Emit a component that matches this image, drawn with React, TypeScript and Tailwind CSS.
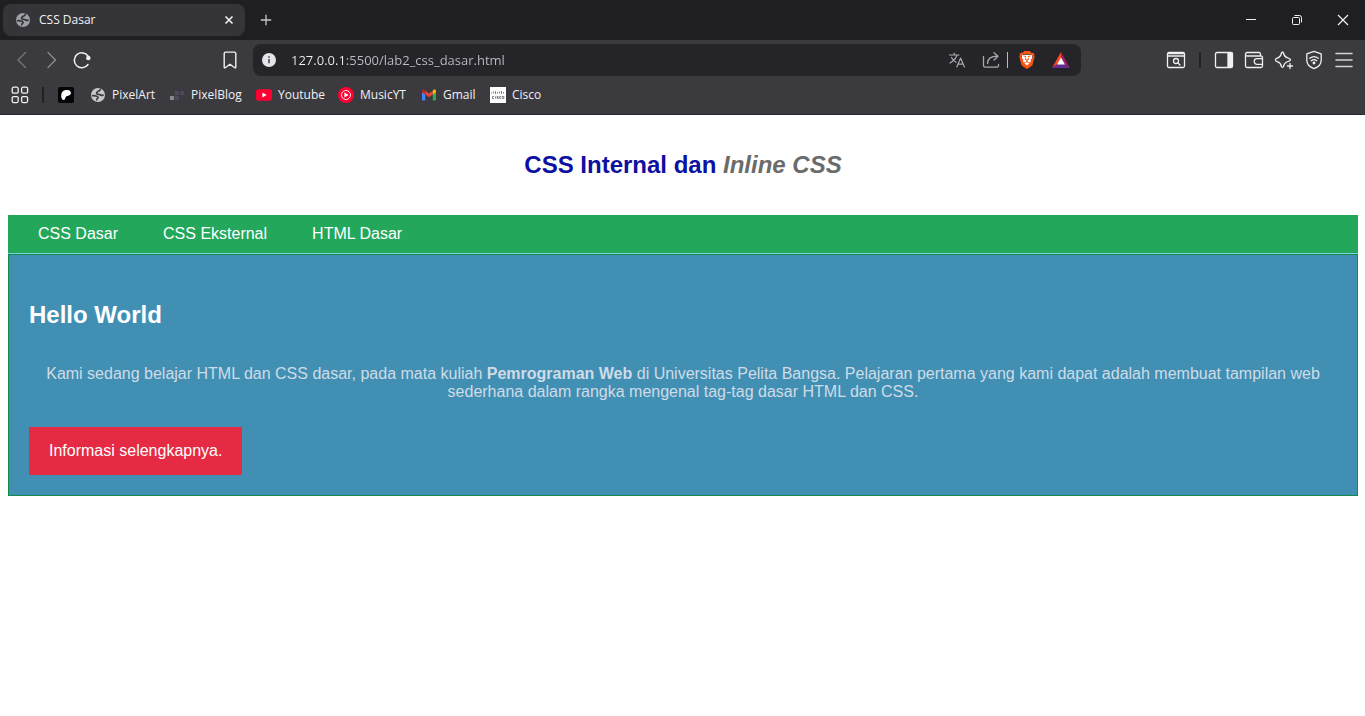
import type { ReactNode } from "react";
import { SiBrave } from "react-icons/si";

function Globe({ color, land }: { color: string; land: string }) {
  return (
    <svg viewBox="0 0 16 16" className="size-4 shrink-0" aria-hidden="true">
      <circle cx="8" cy="8" r="7" fill={color} />
      <path
        d="M10.300 2.400c-.2 1.600-1.700 1.300-2.700 2.200-.9.900-1.400 1.600-.7 2.300.8.700 2.300.1 3.100.8.700.7 1.500.9 3 .4"
        fill="none"
        stroke={land}
        strokeWidth="1.700"
        strokeLinecap="round"
      />
      <path
        d="M2.600 8.700c1.600-.4 2.400-.1 3.500.4 1 .4 2.100.5 2 1.500-.1.900-1.300.8-1.400 2.200"
        fill="none"
        stroke={land}
        strokeWidth="1.700"
        strokeLinecap="round"
      />
    </svg>
  );
}

function IconButton({ label, className = "", children }: { label: string; className?: string; children: ReactNode }) {
  return (
    <button type="button" aria-label={label} className={`flex shrink-0 items-center justify-center ${className}`}>
      {children}
    </button>
  );
}

function Icon({ children, className = "size-5", width = 1.3 }: { children: ReactNode; className?: string; width?: number }) {
  return (
    <svg
      viewBox="0 0 20 20"
      className={className}
      fill="none"
      stroke="currentColor"
      strokeWidth={width}
      strokeLinecap="round"
      strokeLinejoin="round"
      aria-hidden="true"
    >
      {children}
    </svg>
  );
}

function TabStrip() {
  return (
    <div className="flex h-10 items-center bg-[#1f1e23] text-[#f1f1f4]">
      <div className="ml-[3px] flex h-8 w-[242px] items-center rounded-lg bg-[#353439] pr-[10px] pl-3">
        <Globe color="#9aa0a6" land="#353439" />
        <span className="ml-2 flex-1 text-xs">CSS Dasar</span>
        <IconButton label="Close tab" className="size-3">
          <svg viewBox="0 0 12 12" className="size-3" stroke="currentColor" strokeWidth="1.600" aria-hidden="true">
            <path d="M2.500 2.500l7 7M9.500 2.500l-7 7" />
          </svg>
        </IconButton>
      </div>
      <IconButton label="New tab" className="ml-[11px] size-5">
        <svg viewBox="0 0 20 20" className="size-5" stroke="#c8c8cc" strokeWidth="1.300" aria-hidden="true">
          <path d="M10 4.800v10.400M4.800 10h10.400" />
        </svg>
      </IconButton>
      <div className="ml-auto flex">
        <IconButton label="Minimize" className="h-10 w-[46px] pl-[2px]">
          <svg viewBox="0 0 12 12" className="size-3" stroke="currentColor" aria-hidden="true">
            <path d="M1 5.500h10" />
          </svg>
        </IconButton>
        <IconButton label="Restore" className="h-10 w-[46px] pl-[2px]">
          <svg viewBox="0 0 12 12" className="size-3" fill="none" stroke="currentColor" aria-hidden="true">
            <rect x="1.500" y="3.500" width="7" height="7" rx="1" />
            <path d="M3.500 1.500h5a2 2 0 0 1 2 2v5" />
          </svg>
        </IconButton>
        <IconButton label="Close window" className="h-10 w-[46px] pl-[2px]">
          <svg viewBox="0 0 12 12" className="size-3" stroke="currentColor" strokeWidth="1.200" aria-hidden="true">
            <path d="M1 1l10 10M11 1L1 11" />
          </svg>
        </IconButton>
      </div>
    </div>
  );
}

function AddressBar() {
  return (
    <div className="flex h-8 w-[828px] min-w-0 items-center rounded-lg bg-[#252429] pr-[11px] pl-2 text-[#a9a9ae]">
      <IconButton label="Site information" className="size-4">
        <svg viewBox="0 0 16 16" className="size-4" aria-hidden="true">
          <circle cx="8" cy="8" r="7" fill="#e4e4e9" />
          <path d="M8 7v4.200M8 4.300v1.500" stroke="#4a494f" strokeWidth="1.600" />
        </svg>
      </IconButton>
      <input
        aria-label="Address"
        defaultValue="127.0.0.1:5500/lab2_css_dasar.html"
        className="ml-[14px] min-w-0 flex-1 bg-[linear-gradient(90deg,#f0f0f3_54px,#bcbec4_54px)] bg-clip-text text-[13px] leading-5 text-transparent caret-white outline-none"
      />
      <IconButton label="Translate" className="size-5">
        <Icon width={1.2}>
          <path d="M2.500 5h9.500M7.200 3v2M10 5c-1 3.500-3.500 6-7 8M4.500 7.500c1 2 2.500 3.500 4.500 4.800M9.800 17l3.800-9 3.800 9M11 14.200h5.200" />
        </Icon>
      </IconButton>
      <IconButton label="Share" className="ml-[14px] size-5">
        <Icon width={1.3}>
          <path d="M2.500 6.500v9c0 1 .7 1.700 1.700 1.700h11.600c1 0 1.700-.7 1.700-1.700v-1M6.500 13.500c0-5 3-7.300 10-7.300M13 2.700l4 3.500-4 3.800" />
        </Icon>
      </IconButton>
      <span className="ml-[6px] h-4 w-px bg-[#b9b9be]" />
      <IconButton label="Brave Shields" className="relative ml-[10px] size-[18px]">
        <svg viewBox="0 0 24 24" className="size-[18px]" aria-hidden="true">
          <path d="M5 5h14v9l-7 7-7-7z" fill="#fff" />
          <SiBrave size={24} color="#fb5411" />
        </svg>
      </IconButton>
      <IconButton label="Brave Rewards" className="ml-4 size-[18px]">
        <svg viewBox="0 0 18 18" className="size-[18px]" aria-hidden="true">
          <path d="M9 1v6.500L5.500 13 0 17z" fill="#ff4724" />
          <path d="M9 1l9 16-5.500-4L9 7.500z" fill="#9e1f63" />
          <path d="M0 17l5.500-4h7l5.500 4z" fill="#662d91" />
          <path d="M9 6.500l4 7H5z" fill="#fff" />
        </svg>
      </IconButton>
    </div>
  );
}

function Toolbar() {
  return (
    <div className="flex h-10 items-center pr-[11px] pl-3 text-[#f0f0f3]">
      <div className="flex items-center gap-[10px]">
        <IconButton label="Back" className="size-5 text-[#77767b]">
          <Icon><path d="M13.500 2.500L6 10l7.500 7.500" /></Icon>
        </IconButton>
        <IconButton label="Forward" className="size-5 text-[#8d8c91]">
          <Icon><path d="M6 2.500l7.500 7.500L6 17.500" /></Icon>
        </IconButton>
        <IconButton label="Reload" className="size-5">
          <Icon width={1.5}>
            <path d="M16 14.500A7.500 7.500 0 1 1 16.300 6.500" />
            <circle cx="16.300" cy="8" r="1.500" fill="currentColor" />
          </Icon>
        </IconButton>
      </div>
      <IconButton label="Bookmark this page" className="ml-32 size-5">
        <Icon width={1.4}>
          <path d="M4.200 3.500c0-.8.6-1.400 1.400-1.400h8.800c.8 0 1.400.6 1.400 1.400v13.700c0 .6-.5.9-1 .5L10 14.200l-4.800 3.500c-.5.4-1 .1-1-.5z" />
        </Icon>
      </IconButton>
      <div className="ml-[13px] flex min-w-0">
        <AddressBar />
      </div>
      <div className="ml-auto flex items-center gap-[10px]">
        <IconButton label="Search tabs" className="size-5">
          <Icon>
            <rect x="1.500" y="2.500" width="17" height="15" rx="1.500" />
            <path d="M2 3.500h16M2 6h16" />
            <circle cx="10" cy="11" r="2.500" />
            <path d="M12 13l2 2" />
          </Icon>
        </IconButton>
        <span className="mx-[3px] h-4 w-[2px] bg-[#222126]" />
        <IconButton label="Sidebar" className="size-5">
          <Icon>
            <rect x="1.500" y="2.500" width="17" height="15" rx="1.500" />
            <path d="M14 3v14h4V3z" fill="currentColor" />
          </Icon>
        </IconButton>
        <IconButton label="Wallet" className="size-5">
          <Icon>
            <path d="M16.500 6V4c0-.9-.7-1.500-1.500-1.500H3C2.200 2.500 1.500 3.200 1.500 4v12c0 .8.7 1.500 1.500 1.500h14c.8 0 1.500-.7 1.500-1.500V7.500c0-.8-.7-1.500-1.500-1.500H3.500C2.500 6 1.500 5.500 1.500 4.500M18.500 8.700h-5.500a2.800 2.800 0 0 0 0 5.600h5.500" />
          </Icon>
        </IconButton>
        <IconButton label="Leo AI" className="size-5">
          <Icon>
            <path d="M8.500 2.200c.6 0 .9.3 1 .8.6 3 1.500 4 4.500 5 1.500.5 2.500.8 2.500 1.800s-1 1.200-2.500 1.700c-3 1-3.900 2-4.500 5-.1.600-.5.900-1 .9s-.9-.3-1-.9c-.6-3-1.500-4-4.300-4.900-1.100-.4-1.800-.8-1.800-1.700s.7-1.400 1.800-1.800C6 7.200 6.900 6 7.500 3c.1-.5.500-.8 1-.8z" />
            <path d="M16 13.500v5M13.500 16h5" />
          </Icon>
        </IconButton>
        <IconButton label="VPN" className="size-5">
          <Icon>
            <path d="M10 1.300l7.200 2.500v6.500c0 3.800-3.200 6.900-7.200 8.400-4-1.500-7.200-4.600-7.200-8.400V3.800z" />
            <path d="M5.800 8.300c2.500-2 5.900-2 8.400 0M7.300 10.700c1.700-1.300 3.700-1.300 5.400 0" />
            <circle cx="10" cy="13" r=".8" fill="currentColor" />
          </Icon>
        </IconButton>
        <IconButton label="Menu" className="size-5 text-[#d4d4d8]">
          <Icon width={1.6}>
            <path d="M2 3.500h16M2 10h16M2 16.500h16" />
          </Icon>
        </IconButton>
      </div>
    </div>
  );
}

function Bookmark({ label, className, children }: { label: string; className: string; children: ReactNode }) {
  return (
    <a href="#" className={`flex shrink-0 items-center gap-[6px] whitespace-nowrap ${className}`}>
      {children}
      <span>{label}</span>
    </a>
  );
}

function BookmarksBar() {
  return (
    <div className="flex h-[35px] items-center border-b border-[#29282d] pb-1 pl-[11px] text-xs text-[#f1f1f4]">
      <IconButton label="All bookmarks" className="size-[18px]">
        <svg viewBox="0 0 18 18" className="size-[18px]" fill="none" stroke="currentColor" strokeWidth="1.300" aria-hidden="true">
          <rect x="1.200" y="1.200" width="6" height="6" rx="1.500" />
          <rect x="10.600" y="1.200" width="6" height="6" rx="1.500" />
          <rect x="1.200" y="10.600" width="6" height="6" rx="1.500" />
          <rect x="10.600" y="10.600" width="6" height="6" rx="1.500" />
        </svg>
      </IconButton>
      <span className="ml-[13px] h-4 w-[2px] bg-[#222126]" />
      <a href="#" aria-label="Patreon" className="mr-4 ml-[14px]">
        <svg viewBox="0 0 16 16" className="size-4" aria-hidden="true">
          <rect width="16" height="16" rx="2" fill="#050505" />
          <path d="M12.900 6c0-1.600-1.200-2.700-3.200-3-2.700-.4-6 .8-6.400 4.500-.2 2.300.2 5.500 2.200 5.500 1.800 0 1.500-2.500 2.700-3.600C9.400 8.500 12.900 8.800 12.900 6z" fill="#fff" />
        </svg>
      </a>
      <Bookmark label="PixelArt" className="w-[79px]">
        <Globe color="#c5c7cb" land="#3b3a3f" />
      </Bookmark>
      <Bookmark label="PixelBlog" className="w-[87px]">
        <svg viewBox="0 0 16 16" className="size-4" aria-hidden="true">
          <path d="M1 9h4v4H1z" fill="#8f8496" />
          <path d="M6 9h4v4H6zM6 4h4v4H6zM11 4h4v4h-4z" fill="#51475a" />
        </svg>
      </Bookmark>
      <Bookmark label="Youtube" className="w-[82px]">
        <svg viewBox="0 0 16 16" className="size-4" aria-hidden="true">
          <rect y="2.300" width="16" height="11.400" rx="2.800" fill="#ff0033" />
          <path d="M6.400 5.600v4.800L10.600 8z" fill="#fff" />
        </svg>
      </Bookmark>
      <Bookmark label="MusicYT" className="w-[83px]">
        <svg viewBox="0 0 16 16" className="size-4" aria-hidden="true">
          <circle cx="8" cy="8" r="8" fill="#ff0033" />
          <circle cx="8" cy="8" r="4.500" fill="none" stroke="#fff" strokeWidth=".9" />
          <path d="M6.400 5.600v4.800L10.600 8z" fill="#fff" />
        </svg>
      </Bookmark>
      <Bookmark label="Gmail" className="w-[69px]">
        <svg viewBox="0 0 16 16" className="size-4" aria-hidden="true">
          <path d="M1 4.500l3.200 2.300v6.700H2.100c-.6 0-1.100-.5-1.100-1.100z" fill="#4285f4" />
          <path d="M15 4.500l-3.200 2.300v6.700h2.100c.6 0 1.100-.5 1.100-1.100z" fill="#34a853" />
          <path d="M4.200 3.800L8 6.600l3.800-2.800v3.700L8 10.300 4.200 7.500z" fill="#ea4335" />
          <path d="M1 4.200c0-1.400 1.500-2.100 2.600-1.300l.6.900v3.700L1 5.200z" fill="#c5221f" />
          <path d="M15 4.200c0-1.400-1.500-2.100-2.600-1.300l-.6.900v3.700L15 5.200z" fill="#fbbc04" />
        </svg>
      </Bookmark>
      <Bookmark label="Cisco" className="">
        <svg viewBox="0 0 16 16" className="size-4" aria-hidden="true">
          <path d="M0 0h16v16H0z" fill="#fff" />
          <path d="M1.500 5.500v1M3.500 4.500v2M5.500 4v3M7.500 5v1.500M9.500 4.500v2M11.500 4v3M13.500 5v1.500" stroke="#666" strokeWidth=".8" />
          <path d="M4 9.500H2.500v2H4M5.500 9.300v2.400M8.500 9.500H7v1h1.200v1H6.800M11 9.500H9.700v2H11M12.200 9.500h1.600v2h-1.600z" fill="none" stroke="#555" strokeWidth=".7" />
        </svg>
      </Bookmark>
    </div>
  );
}

export default function App() {
  return (
    <div className="min-h-screen bg-white">
      <header className="bg-[#3b3a3f] font-['Open_Sans','Noto_Sans',sans-serif]">
        <TabStrip />
        <Toolbar />
        <BookmarksBar />
      </header>
      <main className="pr-[7px] pl-2 font-['Liberation_Sans',Arial,sans-serif] text-base leading-[18px]">
        <h1 className="pt-9 pb-9 text-center text-2xl leading-7 font-bold text-[#0d10a0]">
          CSS Internal dan <i className="text-[#6b6b6b]">Inline CSS</i>
        </h1>
        <nav className="flex gap-[45px] border-b border-[#7fd0dc] bg-[#22a75b] px-[30px] py-[10px] text-white">
          <a href="#">CSS Dasar</a>
          <a href="#">CSS Eksternal</a>
          <a href="#">HTML Dasar</a>
        </nav>
        <section className="border border-[#138a4b] bg-[#4190b3] p-5">
          <h2 className="pt-[26px] text-2xl leading-7 font-bold text-white">Hello World</h2>
          <p className="mt-9 text-center text-[#d0dbe7]">
            Kami sedang belajar HTML dan CSS dasar, pada mata kuliah <b>Pemrograman Web</b> di Universitas Pelita
            Bangsa. Pelajaran pertama yang kami dapat adalah membuat tampilan web sederhana dalam rangka mengenal
            tag-tag dasar HTML dan CSS.
          </p>
          <a href="#" className="mt-[26px] inline-block bg-[#e52b43] px-5 py-[15px] text-white">
            Informasi selengkapnya.
          </a>
        </section>
      </main>
    </div>
  );
}
